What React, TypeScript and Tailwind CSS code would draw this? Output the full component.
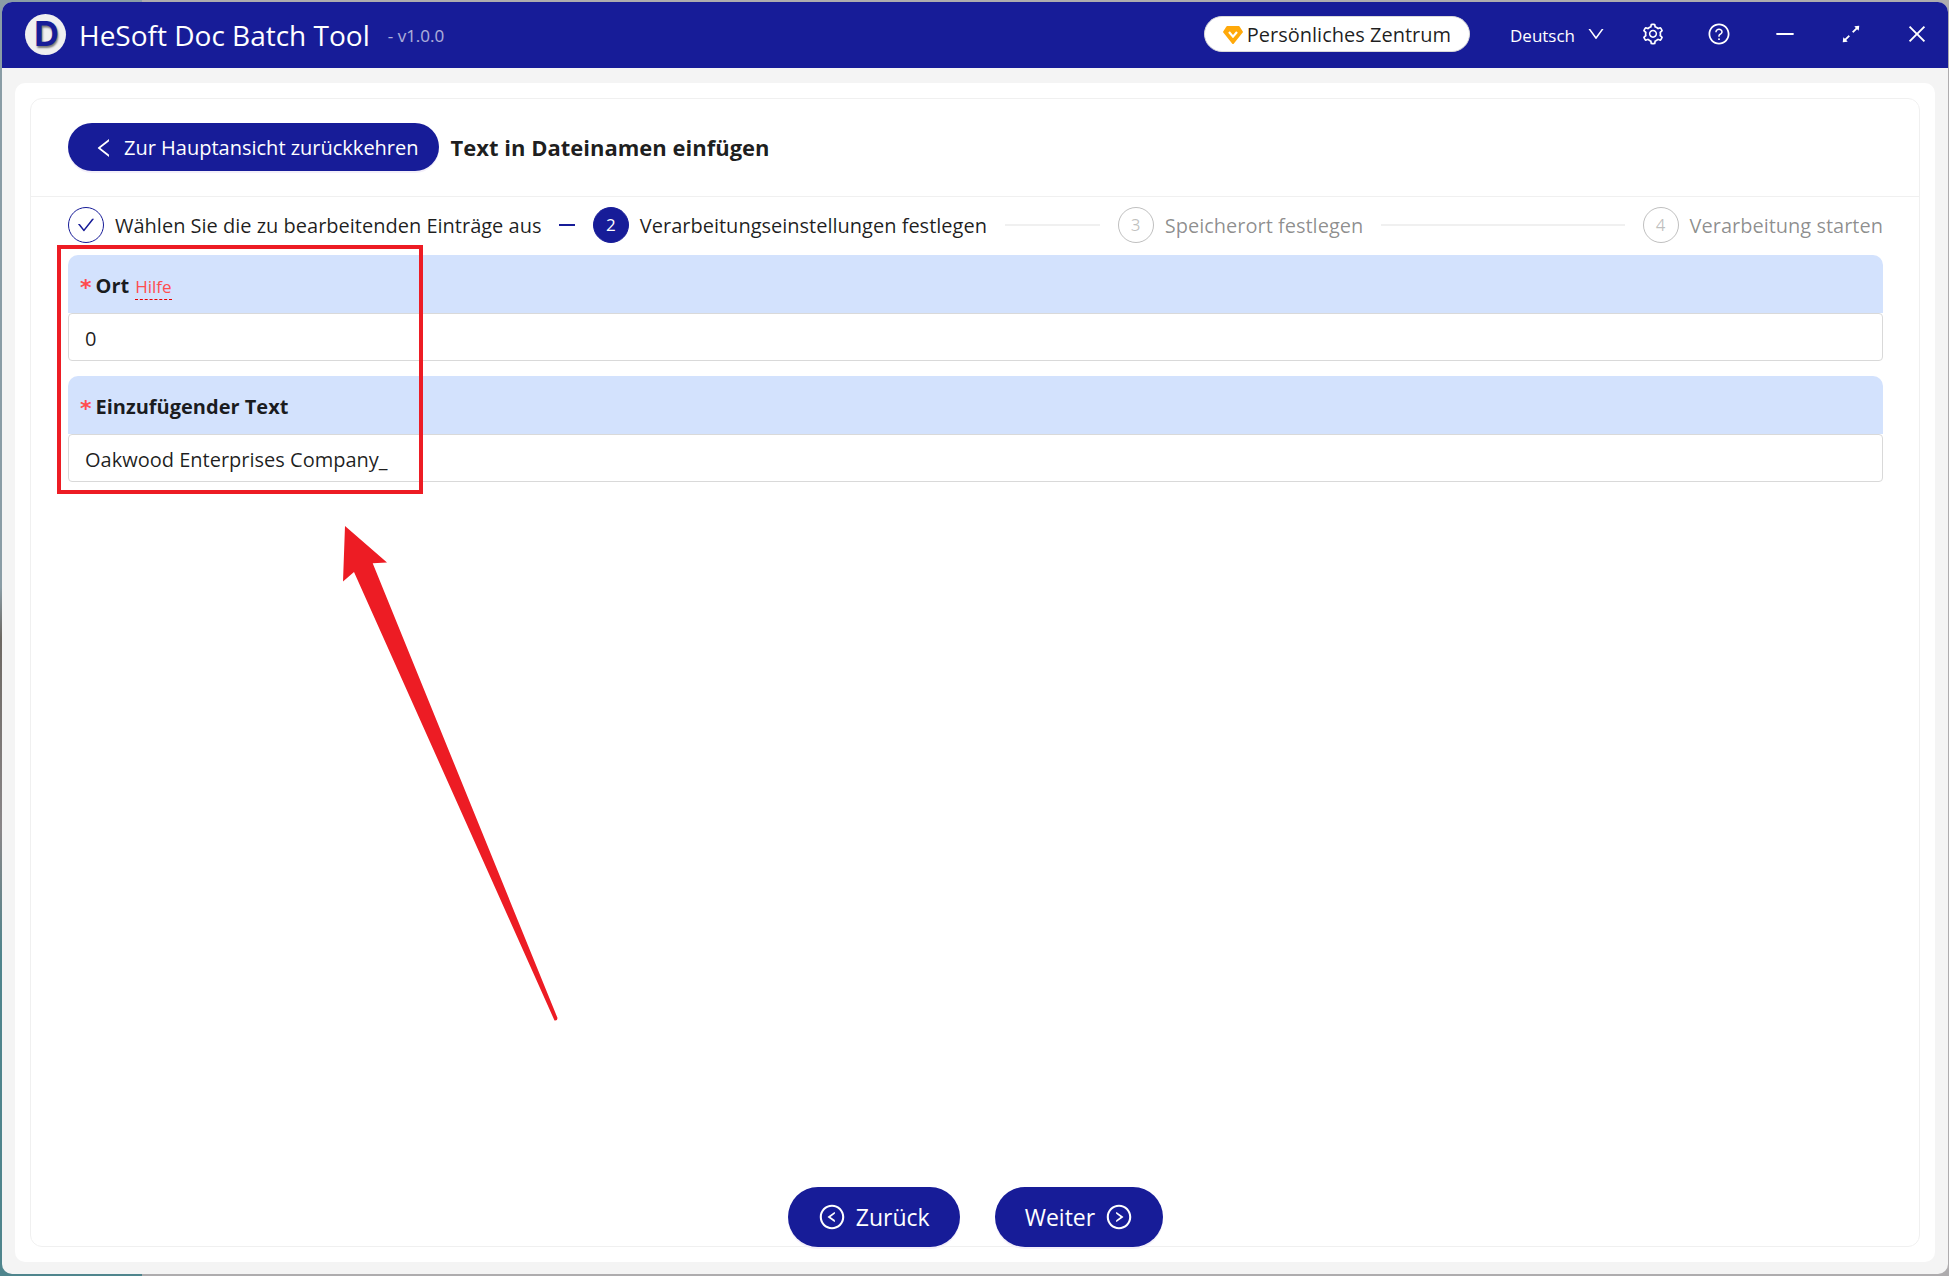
import { useState } from 'react';
import type { ReactNode } from 'react';
import {
  AiOutlineArrowsAlt,
  AiOutlineCheck,
  AiOutlineClose,
  AiOutlineDown,
  AiOutlineLeft,
  AiOutlineLeftCircle,
  AiOutlineMinus,
  AiOutlineQuestionCircle,
  AiOutlineRightCircle,
  AiOutlineSetting,
} from 'react-icons/ai';
import clsx from 'clsx';

const steps = [
  'Wählen Sie die zu bearbeitenden Einträge aus',
  'Verarbeitungseinstellungen festlegen',
  'Speicherort festlegen',
  'Verarbeitung starten',
];

const currentStep = 1;

function GemIcon() {
  return (
    <svg viewBox="0 0 20 18" className="h-[18px] w-5 shrink-0" aria-hidden="true">
      <path
        d="M4.2 0h11.6a1 1 0 0 1 .8.4l3.2 5a1 1 0 0 1-.1 1.2L10.7 17.7a1 1 0 0 1-1.4 0L.3 6.6a1 1 0 0 1-.1-1.2l3.2-5a1 1 0 0 1 .8-.4z"
        fill="#ffa90a"
      />
      <path d="M6 6l4 4.6L14 6" fill="none" stroke="#fff" strokeWidth="2.2" />
    </svg>
  );
}

function WindowButton({ label, children }: { label: string; children: ReactNode }) {
  return (
    <button type="button" aria-label={label} className="flex h-full w-[66px] items-center justify-center">
      {children}
    </button>
  );
}

function TitleBar() {
  return (
    <header className="flex h-[66px] shrink-0 items-center bg-[#171c98] pb-0.5 pl-[23px] text-white">
      <div className="flex size-[41px] items-center justify-center rounded-full bg-[#f0f0f0] pl-0.5 font-['Inter',sans-serif] text-[34px] leading-none font-bold text-[#171c98] [text-shadow:1px_2px_2px_#00000080]">
        D
      </div>
      <div className="ml-[13px] pt-0.5 text-[28px] leading-9">HeSoft Doc Batch Tool</div>
      <div className="ml-[18px] pt-1 text-[17px] leading-6 text-white/65">- v1.0.0</div>

      <div className="-mr-0.5 ml-auto flex h-full items-center">
        <button
          type="button"
          className="flex h-9 items-center gap-1 rounded-full border border-[#d9d9d9] bg-white px-[18px] pt-0.5 text-[20px] leading-6 text-black/88"
        >
          <GemIcon />
          Persönliches Zentrum
        </button>
        <div className="relative ml-10 flex items-center">
          <select aria-label="Sprache" defaultValue="de" className="appearance-none bg-transparent pt-1 pr-7 text-[17px] leading-6">
            <option value="de">Deutsch</option>
          </select>
          <AiOutlineDown className="pointer-events-none absolute -right-0.5 size-5" />
        </div>
        <div className="ml-4 flex h-full">
          <WindowButton label="Einstellungen">
            <AiOutlineSetting className="size-6" />
          </WindowButton>
          <WindowButton label="Hilfe">
            <AiOutlineQuestionCircle className="size-6" />
          </WindowButton>
          <WindowButton label="Minimieren">
            <AiOutlineMinus className="size-6" />
          </WindowButton>
          <WindowButton label="Maximieren">
            <AiOutlineArrowsAlt className="size-6" />
          </WindowButton>
          <WindowButton label="Schließen">
            <AiOutlineClose className="size-6" />
          </WindowButton>
        </div>
      </div>
    </header>
  );
}

function Steps() {
  return (
    <ol className="flex gap-[18px] text-[20px] leading-9">
      {steps.map((title, index) => (
        <li
          key={title}
          className={clsx(
            'flex items-center whitespace-nowrap',
            index < steps.length - 1 && 'flex-1',
            index <= currentStep ? 'text-black/88' : 'text-black/45'
          )}
        >
          <span
            className={clsx(
              'mr-[11px] flex size-9 shrink-0 items-center justify-center rounded-full border text-[17px]',
              index < currentStep && 'border-[#171c98] text-[#171c98]',
              index === currentStep && 'border-[#171c98] bg-[#171c98] text-white',
              index > currentStep && 'border-black/25 text-black/25'
            )}
          >
            {index < currentStep ? <AiOutlineCheck className="size-5" /> : index + 1}
          </span>
          <span className="pt-0.5 leading-8">{title}</span>
          {index < steps.length - 1 && (
            <span className={clsx('ml-[18px] h-0.5 flex-1', index < currentStep ? 'bg-[#171c98]' : 'bg-[#f0f0f0]')} />
          )}
        </li>
      ))}
    </ol>
  );
}

interface FieldProps {
  id: string;
  label: string;
  value: string;
  onChange: (value: string) => void;
  help?: boolean;
}

function Field({ id, label, value, onChange, help }: FieldProps) {
  return (
    <div>
      <div className="flex h-[58px] items-center rounded-t-[10px] bg-[#d3e2fd] px-3 pt-1 text-[20px] leading-6">
        <span className="mr-1 pt-1 font-['DejaVu_Sans',sans-serif] text-[22px] font-bold text-[#ff4d4f]">*</span>
        <label htmlFor={id} className="font-bold text-black/88">
          {label}
        </label>
        {help && (
          <a href="#hilfe" className="ml-1.5 border-b border-dashed border-[#e60000] pt-0.5 text-[17px] leading-6 text-[#ff4d4f]">
            Hilfe
          </a>
        )}
      </div>
      <input
        id={id}
        type="text"
        value={value}
        onChange={(e) => onChange(e.target.value)}
        className="block h-12 w-full rounded-[4px] border border-[#d9d9d9] bg-white px-4 pt-0.5 text-[20px] leading-6 text-black/88 outline-none"
      />
    </div>
  );
}

// Red frame and arrow that point at the two form fields
function Callout() {
  return (
    <>
      <div className="pointer-events-none absolute top-[146px] left-[26px] h-[249px] w-[366px] border-4 border-[#ed1c24]" />
      <svg viewBox="0 0 216 498" className="pointer-events-none absolute top-[426px] left-[311px] h-[498px] w-[216px]" aria-hidden="true">
        <path d="M3 1L45 37.5L30.7 38.2L215.5 493Q215.5 496 212.5 495.5L12 47L1 56.5Z" fill="#ed1c24" />
      </svg>
    </>
  );
}

export default function App() {
  const [position, setPosition] = useState('0');
  const [text, setText] = useState('Oakwood Enterprises Company_');

  return (
    <div className="flex min-h-screen flex-col bg-[linear-gradient(to_right,transparent_142px,#aeacae_142px),linear-gradient(to_bottom,#8a9da6_46%,#6d6862_50%,#8a8688_65%,#4f858d_75%)] py-0.5 pr-px pl-0.5 font-['Open_Sans','Noto_Sans',sans-serif]">
      <div className="flex grow flex-col overflow-hidden rounded-[10px] bg-[#f4f4f4]">
        <TitleBar />
        <main className="mx-[13px] mt-[15px] mb-3 flex grow flex-col rounded-[10px] bg-white p-[15px]">
          <section className="relative flex grow flex-col rounded-[12px] border border-[#f0f0f0]">
            <div className="flex h-[98px] items-center gap-3 border-b border-[#f0f0f0] px-[37px] pb-0.5">
              <button
                type="button"
                className="flex h-12 items-center gap-2 rounded-full bg-[#171c98] pt-0.5 pr-5 pl-6 text-[20px] leading-6 text-white shadow-[0_2px_0_#f3effa]"
              >
                <AiOutlineLeft className="size-6" />
                Zur Hauptansicht zurückkehren
              </button>
              <h1 className="text-[22px] leading-8 font-bold text-black/88">Text in Dateinamen einfügen</h1>
            </div>

            <div className="flex grow flex-col pt-2.5 pr-9 pl-[37px]">
              <Steps />
              <form className="mt-3 flex flex-col gap-[15px]" onSubmit={(e) => e.preventDefault()}>
                <Field id="position" label="Ort" value={position} onChange={setPosition} help />
                <Field id="text" label="Einzufügender Text" value={text} onChange={setText} />
              </form>

              <div className="mt-auto -mb-px flex justify-center gap-[35px] text-[23px] leading-8 text-white">
                <button type="button" className="flex h-[60px] items-center gap-2.5 rounded-full bg-[#171c98] px-[30px] shadow-[0_2px_0_#f3effa]">
                  <AiOutlineLeftCircle className="size-7" />
                  Zurück
                </button>
                <button type="button" className="flex h-[60px] items-center gap-2.5 rounded-full bg-[#171c98] px-[30px] shadow-[0_2px_0_#f3effa]">
                  Weiter
                  <AiOutlineRightCircle className="size-7" />
                </button>
              </div>
            </div>

            <Callout />
          </section>
        </main>
      </div>
    </div>
  );
}
